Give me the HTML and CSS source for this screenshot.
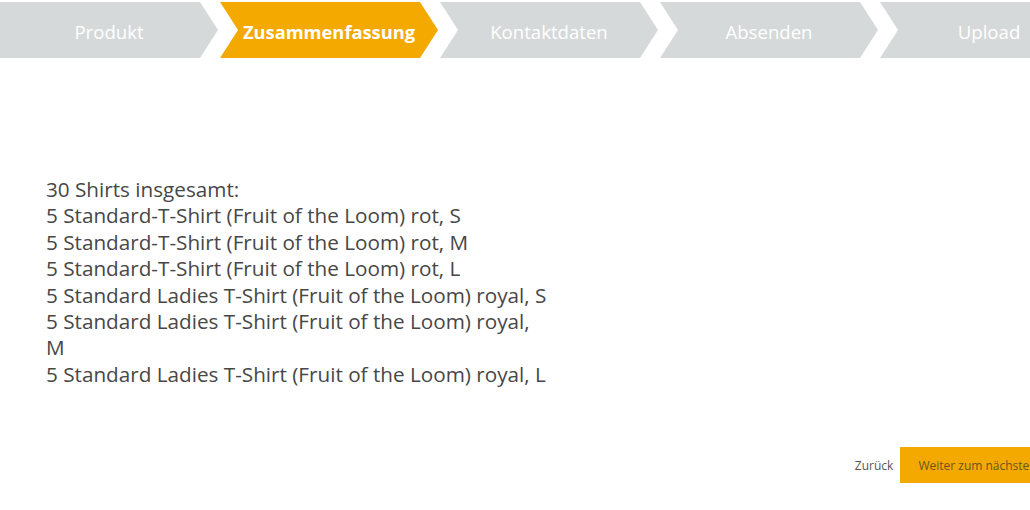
FILE: index.html
```html
<!DOCTYPE html>
<html lang="de">

<head>
  <meta charset="UTF-8" />
  <meta name="viewport" content="width=device-width, initial-scale=1.0" />
  <title>Zusammenfassung - Bestellung</title>
  <link rel="stylesheet" href="styles.css">
</head>

<body>

  <div class="page">
    <nav class="steps">
      <div class="step first">Produkt</div>
      <div class="step active">Zusammenfassung</div>
      <div class="step">Kontaktdaten</div>
      <div class="step">Absenden</div>
      <div class="step">Upload</div>
    </nav>

    <div class="summary">
      30 Shirts insgesamt:<br />
      5 Standard-T-Shirt (Fruit of the Loom) rot, S<br />
      5 Standard-T-Shirt (Fruit of the Loom) rot, M<br />
      5 Standard-T-Shirt (Fruit of the Loom) rot, L<br />
      5 Standard Ladies T-Shirt (Fruit of the Loom) royal, S<br />
      5 Standard Ladies T-Shirt (Fruit of the Loom) royal, M<br />
      5 Standard Ladies T-Shirt (Fruit of the Loom) royal, L
    </div>

    <div class="actions">
      <a class="back-link" href="#">Zurück</a>
      <button class="next-btn">Weiter zum nächsten Schritt</button>
    </div>
  </div>

</body>

</html>
```

FILE: styles.css
```css
body {
  font-family: 'Open Sans', sans-serif;
  background: #fff;
  margin: 0;
  padding: 0;
  overflow: hidden;
}

.page {
  width: 1100px;
}

.steps {
  display: flex;
  gap: 2px;
  margin-top: 2px;
}

.step {
  flex: 0 0 218px;
  height: 56px;
  padding-top: 2px;
  box-sizing: border-box;
  display: flex;
  align-items: center;
  justify-content: center;
  background: #d6d9d9;
  color: #fff;
  font-size: 18.6px;
  clip-path: polygon(0 0, 200px 0, 218px 50%, 200px 100%, 0 100%, 18px 50%);
}

.step.first {
  clip-path: polygon(0 0, 200px 0, 218px 50%, 200px 100%, 0 100%);
}

.step.active {
  background: #f4a900;
  font-weight: bold;
  font-size: 18.3px;
}

.summary {
  width: 504px;
  margin: 118px 0 0 46px;
  font-size: 20.7px;
  line-height: 26.4px;
  color: #474747;
}

.actions {
  display: flex;
  justify-content: flex-end;
  align-items: center;
  gap: 7px;
  margin-top: 60px;
  padding-right: 6px;
}

.back-link {
  font-size: 12px;
  color: #555;
  text-decoration: none;
}

.next-btn {
  font-family: 'Open Sans', sans-serif;
  font-size: 12px;
  color: #6b5520;
  background: #f4a900;
  border: none;
  height: 36px;
  padding: 0 18px;
  cursor: pointer;
}
```
